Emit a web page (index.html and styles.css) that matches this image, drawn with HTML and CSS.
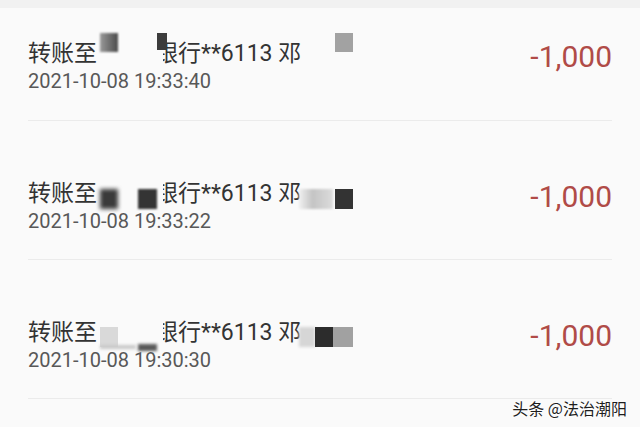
FILE: index.html
```html
<!DOCTYPE html>
<html lang="zh-CN">
<head>
    <meta charset="UTF-8">
    <meta name="viewport" content="width=device-width, initial-scale=1.0">
    <title>交易记录</title>
    <link rel="stylesheet" href="styles.css">
</head>
<body>
    <div class="top-bar"></div>
    <ul class="bill-list">
        <li class="bill bill-1">
            <div class="info">
                <div class="title">转账至<span class="redact head"><i class="blk a"></i><i class="blk b"></i></span>银行**6113 邓<span class="redact tail"><i class="blk c"></i></span></div>
                <div class="time">2021-10-08 19:33:40</div>
            </div>
            <div class="amount">-1,000</div>
        </li>
        <li class="bill bill-2">
            <div class="info">
                <div class="title">转账至<span class="redact head"><i class="blk a"></i><i class="blk b"></i></span>银行**6113 邓<span class="redact tail"><i class="blk c"></i><i class="blk d"></i></span></div>
                <div class="time">2021-10-08 19:33:22</div>
            </div>
            <div class="amount">-1,000</div>
        </li>
        <li class="bill bill-3">
            <div class="info">
                <div class="title">转账至<span class="redact head"><i class="blk a"></i><i class="blk b"></i><i class="blk e"></i></span>银行**6113 邓<span class="redact tail"><i class="blk c"></i><i class="blk d"></i><i class="blk f"></i></span></div>
                <div class="time">2021-10-08 19:30:30</div>
            </div>
            <div class="amount">-1,000</div>
        </li>
    </ul>
    <div class="watermark">头条 @法治潮阳</div>
</body>
</html>
```

FILE: styles.css
```css
body {
    margin: 0;
    background: #fafafa;
    font-family: Roboto, "Noto Sans CJK SC", sans-serif;
    height: 427px;
    overflow: hidden;
    position: relative;
}
.top-bar {
    height: 8px;
    background: #f1f1f1;
}
.bill-list {
    list-style: none;
    margin: 0;
    padding: 0;
}
.bill {
    display: flex;
    justify-content: space-between;
    align-items: flex-start;
    margin: 0 28px;
    padding: 59px 0 25px;
    border-bottom: 1px solid #ebebeb;
}
.bill-1 {
    padding-top: 32px;
    padding-bottom: 26px;
}
.title {
    font-size: 23px;
    line-height: 28px;
    color: #333;
    white-space: nowrap;
}
.time {
    font-size: 20px;
    line-height: 26px;
    color: #585858;
}
.amount {
    font-size: 30px;
    line-height: 34px;
    color: #b04b47;
}

/* mosaic over the bank name and the payee */
.redact {
    display: inline-block;
    position: relative;
    z-index: 1;
    height: 28px;
    vertical-align: top;
}
.redact.head {
    width: 66px;
    margin-right: -8px;
    background: #fafafa;
}
.redact.tail {
    width: 54px;
    margin-left: -2px;
}
.blk {
    position: absolute;
    display: block;
}

.bill-1 .a { left: 3px; top: -7px; width: 18px; height: 19px; background: linear-gradient(90deg, #9a9a9a, #4a4a4a); filter: blur(1px); }
.bill-1 .b { left: 60px; top: -7px; width: 10px; height: 17px; background: #3c3c3c; filter: blur(0.6px); }
.bill-1 .c { left: 36px; top: -7px; width: 18px; height: 19px; background: #a2a2a2; }

.bill-2 .a { left: 3px; top: 9px; width: 18px; height: 20px; background: #3a3a3a; filter: blur(2px); }
.bill-2 .b { left: 41px; top: 9px; width: 19px; height: 20px; background: #343434; filter: blur(0.8px); }
.bill-2 .c { left: 0; top: 9px; width: 34px; height: 20px; background: linear-gradient(90deg, #f0f0f0, #c4c4c4 40%, #dcdcdc); filter: blur(1px); }
.bill-2 .d { left: 36px; top: 9px; width: 18px; height: 20px; background: #333; }

.bill-3 .a { left: 3px; top: 8px; width: 18px; height: 20px; background: #d9d9d9; }
.bill-3 .b { left: 41px; top: 25px; width: 19px; height: 7px; background: #595959; filter: blur(1.5px); }
.bill-3 .e { left: 3px; top: 26px; width: 36px; height: 4px; background: #c9c9c9; filter: blur(1.5px); }
.bill-3 .c { left: 0; top: 8px; width: 16px; height: 20px; background: #d6d6d6; filter: blur(1.5px); }
.bill-3 .d { left: 16px; top: 8px; width: 18px; height: 20px; background: #2c2c2c; }
.bill-3 .f { left: 34px; top: 8px; width: 20px; height: 20px; background: #a1a1a1; }

.watermark {
    position: absolute;
    right: 13px;
    bottom: 9px;
    font-family: "Noto Sans CJK SC", sans-serif;
    font-size: 16px;
    line-height: 20px;
    color: #1e1e1e;
    text-shadow: -1px 1px 0 #fff, 1px 0 0 #fff;
}
```
